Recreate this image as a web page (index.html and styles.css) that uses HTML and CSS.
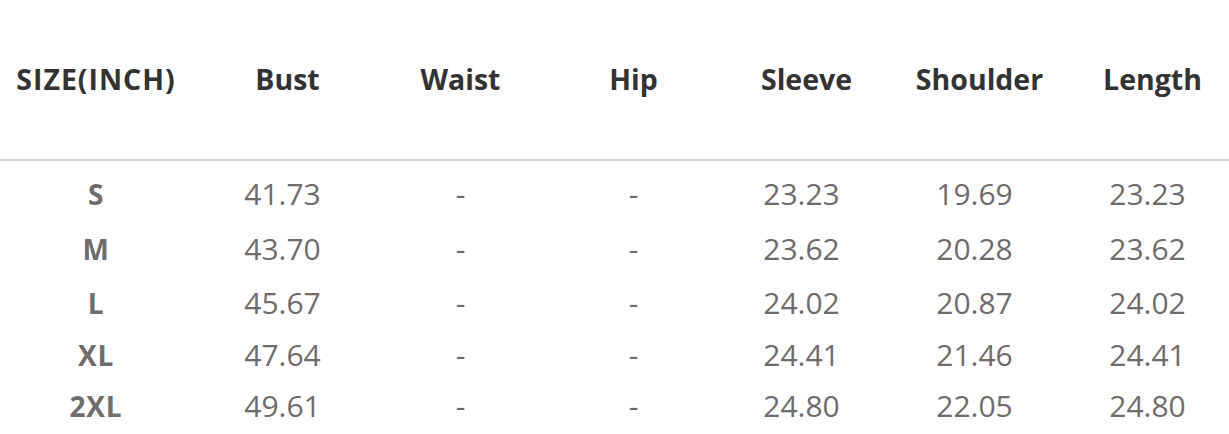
FILE: index.html
```html
<!DOCTYPE html>
<html lang="en">
<head>
<meta charset="utf-8">
<title>Size chart</title>
<link rel="stylesheet" href="styles.css">
</head>
<body>
<div class="chart">
  <div class="head">
    <div class="cell first">SIZE(INCH)</div>
    <div class="cell">Bust</div>
    <div class="cell">Waist</div>
    <div class="cell">Hip</div>
    <div class="cell">Sleeve</div>
    <div class="cell">Shoulder</div>
    <div class="cell">Length</div>
  </div>
  <div class="rows">
    <div class="row r1">
      <div class="cell first">S</div><div class="cell num">41.73</div><div class="cell">-</div><div class="cell">-</div><div class="cell num">23.23</div><div class="cell num">19.69</div><div class="cell num">23.23</div>
    </div>
    <div class="row r2">
      <div class="cell first">M</div><div class="cell num">43.70</div><div class="cell">-</div><div class="cell">-</div><div class="cell num">23.62</div><div class="cell num">20.28</div><div class="cell num">23.62</div>
    </div>
    <div class="row r3">
      <div class="cell first">L</div><div class="cell num">45.67</div><div class="cell">-</div><div class="cell">-</div><div class="cell num">24.02</div><div class="cell num">20.87</div><div class="cell num">24.02</div>
    </div>
    <div class="row r4">
      <div class="cell first">XL</div><div class="cell num">47.64</div><div class="cell">-</div><div class="cell">-</div><div class="cell num">24.41</div><div class="cell num">21.46</div><div class="cell num">24.41</div>
    </div>
    <div class="row r5">
      <div class="cell first">2XL</div><div class="cell num">49.61</div><div class="cell">-</div><div class="cell">-</div><div class="cell num">24.80</div><div class="cell num">22.05</div><div class="cell num">24.80</div>
    </div>
  </div>
</div>
</body>
</html>
```
FILE: styles.css
```css
html, body {
  margin: 0;
  padding: 0;
  background: #ffffff;
  overflow: hidden;
}
body {
  width: 1229px;
  height: 434px;
  font-family: "Open Sans", "Noto Sans", sans-serif;
}
.chart {
  width: 1239px;
}
.head, .row {
  display: grid;
  grid-template-columns: 201px repeat(6, 173px);
  align-items: center;
}
.head {
  height: 159px;
  border-bottom: 2px solid #cfcfcf;
  color: #333333;
  font-weight: 700;
  font-size: 28.5px;
}
.head .cell.first {
  letter-spacing: 1px;
}
.rows {
  padding-top: 6px;
  color: #706c6c;
  font-size: 30px;
}
.cell {
  text-align: center;
  line-height: 1;
  white-space: nowrap;
}
.cell.first {
  padding-right: 9px;
}
.cell.num {
  padding-right: 10px;
}
.row .cell.first {
  font-weight: 700;
  font-size: 28px;
  letter-spacing: 0.8px;
}
.r1 { height: 54px; }
.r2 { height: 55px; }
.r3 { height: 54px; }
.r4 { height: 50px; }
.r5 { height: 52px; }
```
